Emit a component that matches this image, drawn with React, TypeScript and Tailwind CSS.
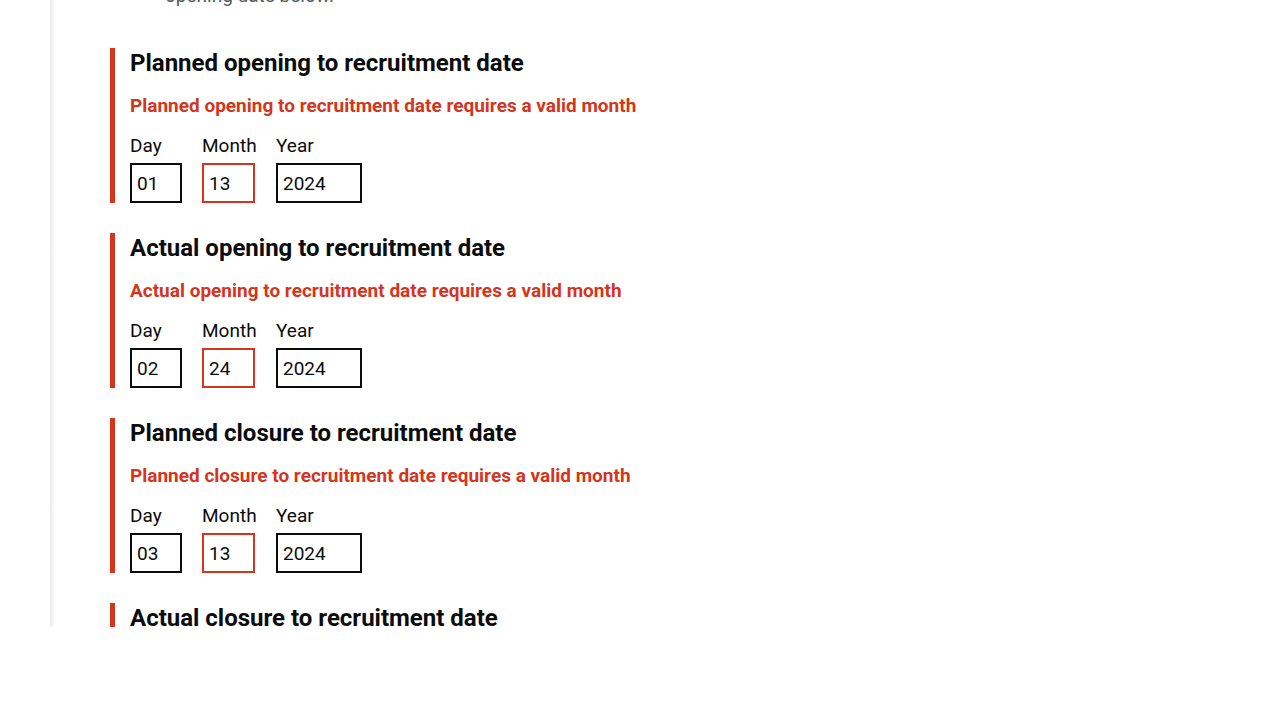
import { useId } from "react";

type DateParts = { day: string; month: string; year: string };

const groups: { name: string; value?: DateParts }[] = [
  { name: "Planned opening to recruitment date", value: { day: "01", month: "13", year: "2024" } },
  { name: "Actual opening to recruitment date", value: { day: "02", month: "24", year: "2024" } },
  { name: "Planned closure to recruitment date", value: { day: "03", month: "13", year: "2024" } },
  { name: "Actual closure to recruitment date" },
];

function DateInput({ label, value, width, invalid = false }: {
  label: string;
  value: string;
  width: string;
  invalid?: boolean;
}) {
  const id = useId();
  return (
    <div>
      <label htmlFor={id} className="mb-[5px] block leading-[25px]">{label}</label>
      <input
        id={id}
        defaultValue={value}
        inputMode="numeric"
        aria-invalid={invalid}
        className={`block h-10 border-2 bg-white p-[5px] ${width} ${invalid ? "border-[#d4351c]" : "border-[#0b0c0c]"}`}
      />
    </div>
  );
}

function DateGroup({ name, value }: { name: string; value?: DateParts }) {
  return (
    <div role="group" aria-label={name} className="border-l-5 border-[#d4351c] pl-[15px]">
      <h2 className="text-2xl leading-[30px] font-bold">{name}</h2>
      {value && (
        <>
          <p className="my-[15px] leading-[25px] font-bold text-[#d4351c]">{name} requires a valid month</p>
          <div className="grid grid-cols-[52px_54px_86px] gap-5">
            <DateInput label="Day" value={value.day} width="w-[52px]" />
            <DateInput label="Month" value={value.month} width="w-[53px]" invalid />
            <DateInput label="Year" value={value.year} width="w-[86px]" />
          </div>
        </>
      )}
    </div>
  );
}

export default function App() {
  return (
    <main className="h-[calc(100vh-93px)] overflow-hidden pl-[50px] font-[Roboto,sans-serif] text-[19px] text-[#0b0c0c]">
      <div className="flex min-h-full">
        <div className="w-1 shrink-0 bg-linear-to-r from-[#ebebeb] to-[#fafafa]" />
        <div className="flex grow flex-col pl-14">
          <p className="-mt-[17px] pl-[55px] leading-[25px] text-[#505a5f]">opening date below.</p>
          <div className="mt-10 flex flex-col gap-[30px]">
            {groups.map((group) => (
              <DateGroup key={group.name} {...group} />
            ))}
          </div>
        </div>
      </div>
    </main>
  );
}
